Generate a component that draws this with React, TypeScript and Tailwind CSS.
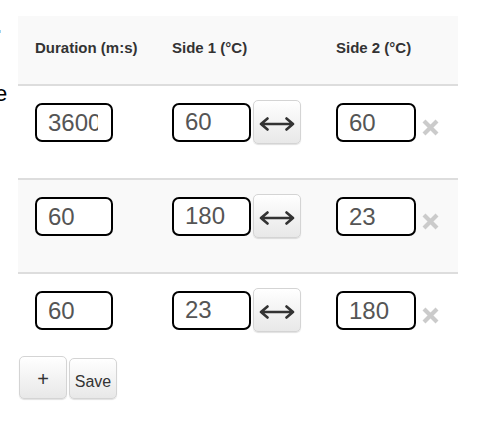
import React from "react";

type Step = { duration: string; side1: string; side2: string };

const steps: Step[] = [
  { duration: "3600", side1: "60", side2: "60" },
  { duration: "60", side1: "180", side2: "23" },
  { duration: "60", side1: "23", side2: "180" },
];

function Field({ value, width = "w-[79px]" }: { value: string; width?: string }) {
  return (
    <input
      readOnly
      value={value}
      className={`${width} h-[39px] shrink-0 rounded-[7px] border-2 border-black bg-white pl-[11px] pr-[13px] text-[24px] leading-none text-[#555] outline-none`}
    />
  );
}

function SwapButton() {
  return (
    <button className="ml-[2px] flex h-[44px] w-[48px] shrink-0 items-center justify-center rounded-[5px] border border-[#d4d4d4] bg-gradient-to-b from-white to-[#e8e8e8] shadow-[0_1px_1px_rgba(0,0,0,0.12)]">
      <svg width="36" height="14" viewBox="0 0 36 14" className="mt-[3px]">
        <path
          d="M2 7 H34 M8.5 1.5 L2 7 L8.5 12.5 M27.5 1.5 L34 7 L27.5 12.5"
          fill="none"
          stroke="#333"
          strokeWidth="2.6"
          strokeLinecap="round"
          strokeLinejoin="round"
        />
      </svg>
    </button>
  );
}

function RemoveIcon() {
  return (
    <svg width="19" height="19" viewBox="0 0 19 19" className="ml-[5px] mt-[15px] shrink-0">
      <path d="M3 3 L16 16 M16 3 L3 16" stroke="#cbcbcb" strokeWidth="4.2" />
    </svg>
  );
}

function Row({ step, shaded, last }: { step: Step; shaded: boolean; last: boolean }) {
  return (
    <div
      className={`grid grid-cols-[137px_164px_139px] ${last ? "h-[82px]" : "h-[94px] border-b-2 border-[#dddddd]"} ${shaded ? "bg-[#f9f9f9]" : "bg-white"}`}
    >
      <div className="pl-[17px] pt-[17px]">
        <Field value={step.duration} width="w-[78px]" />
      </div>
      <div className="flex items-start pl-[17px] pt-[14px]">
        <div className="flex items-center">
          <Field value={step.side1} />
          <SwapButton />
        </div>
      </div>
      <div className="flex items-start pl-[17px] pt-[17px]">
        <Field value={step.side2} width="w-[80px]" />
        <RemoveIcon />
      </div>
    </div>
  );
}

export default function App() {
  return (
    <div className="flex h-[426px] w-[486px] overflow-hidden bg-white font-['Liberation_Sans',Arial,sans-serif] text-[#333]">
      <div className="w-[18px] shrink-0 overflow-hidden">
        <div className="mt-[30px] h-[3px] w-[1px] bg-[#9fd6f2]" />
        <div className="-ml-[5px] mt-[50px] text-[22px] leading-none text-black">e</div>
      </div>
      <div className="w-[440px] pt-[16px]">
        <div className="grid h-[70px] grid-cols-[137px_164px_139px] items-center border-b-2 border-[#dddddd] bg-[#f9f9f9] pb-[3px] text-[15px] font-bold">
          <div className="pl-[17px]">Duration (m:s)</div>
          <div className="pl-[17px]">Side 1 (°C)</div>
          <div className="pl-[17px]">Side 2 (°C)</div>
        </div>
        {steps.map((s, i) => (
          <Row key={i} step={s} shaded={i === 1} last={i === steps.length - 1} />
        ))}
        <div className="flex items-end gap-[2px] pl-[1px]">
          <button className="flex h-[43px] w-[48px] items-center justify-center rounded-[5px] border border-[#d4d4d4] bg-gradient-to-b from-white to-[#e8e8e8] pt-[2px] text-[20px] leading-none text-[#333] shadow-[0_1px_1px_rgba(0,0,0,0.12)]">
            +
          </button>
          <button className="flex h-[41px] w-[48px] items-center justify-center rounded-[5px] border border-[#d4d4d4] bg-gradient-to-b from-white to-[#e8e8e8] pt-[7px] text-[16px] leading-none text-[#333] shadow-[0_1px_1px_rgba(0,0,0,0.12)]">
            Save
          </button>
        </div>
      </div>
    </div>
  );
}
